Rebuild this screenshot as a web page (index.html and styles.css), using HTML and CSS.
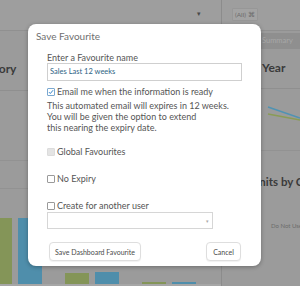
FILE: index.html
```html
<!DOCTYPE html>
<html>
<head>
<meta charset="utf-8">
<link rel="stylesheet" href="styles.css">
</head>
<body>
<div class="dash">
  <div class="col left">
    <div class="filterbar"><span class="caret">▾</span></div>
    <div class="ptitle"><span class="clip-title">Sales by Category</span></div>
    <div class="rowband r1"></div>
    <div class="rowband r2"></div>
    <div class="bars">
      <div class="group"><span class="bar green" style="height:66px"></span><span class="bar blue" style="height:66px"></span></div>
      <div class="group"><span class="bar green" style="height:11px"></span><span class="bar blue" style="height:12px"></span></div>
      <div class="group"><span class="bar green" style="height:2px"></span><span class="bar blue" style="height:2px"></span></div>
    </div>
  </div>
  <div class="col right">
    <div class="filterbar rf"><span class="chip">(All) ⌘</span></div>
    <div class="tabs"><span class="tab">Summary</span></div>
    <div class="ytitle">Year</div>
    <div class="chart">
      <svg width="78" height="61" viewBox="0 0 78 61">
        <polyline points="46,18 78,29" fill="none" stroke="#4f93b3" stroke-width="1.5"/>
        <polyline points="46,25 78,31" fill="none" stroke="#8a9c55" stroke-width="1.5"/>
      </svg>
    </div>
    <div class="utitle">Units by Category</div>
    <div class="legend">Do Not Use</div>
  </div>
</div>

<div class="overlay">
  <div class="modal">
    <div class="mtitle">Save Favourite</div>
    <div class="mbody">
      <label class="flabel">Enter a Favourite name</label>
      <div class="input">Sales Last 12 weeks</div>
      <div class="check-row email">
        <span class="cb checked">
          <svg width="8" height="8" viewBox="0 0 8 8"><path d="M1.3 4.2 L3.1 6 L6.8 1.6" fill="none" stroke="#2d7fc6" stroke-width="1.3"/></svg>
        </span>
        <span>Email me when the information is ready</span>
      </div>
      <p class="desc">This automated email will expires in 12 weeks.<br>You will be given the option to extend<br>this nearing the expiry date.</p>
      <div class="check-row global"><span class="cb disabled"></span><span>Global Favourites</span></div>
      <div class="check-row noexp"><span class="cb"></span><span>No Expiry</span></div>
      <div class="check-row create"><span class="cb"></span><span>Create for another user</span></div>
      <div class="select"><span class="sel-caret">▾</span></div>
      <div class="actions">
        <button class="btn save">Save Dashboard Favourite</button>
        <button class="btn cancel">Cancel</button>
      </div>
    </div>
  </div>
</div>
</body>
</html>
```

FILE: styles.css
```css
* { box-sizing: border-box; }
html, body { margin: 0; padding: 0; }
body {
  width: 300px;
  height: 286px;
  overflow: hidden;
  background: #9b9b9b;
  font-family: "Lato", "Open Sans", sans-serif;
  position: relative;
}
.dash {
  display: grid;
  grid-template-columns: 222px 78px;
  height: 286px;
}
.col { display: flex; flex-direction: column; overflow: hidden; }
.left { border-right: 1px solid #8c8c8c; }
.filterbar {
  height: 31px;
  flex: none;
  border-bottom: 1px solid #909090;
  background: #9e9e9e;
  display: flex;
  align-items: center;
  justify-content: flex-end;
  padding-right: 12px;
}
.left .filterbar { padding-right: 20px; }
.caret { font-size: 7px; color: #4a4a4a; margin-top: -3px; }
.ptitle {
  height: 60px;
  flex: none;
  border-bottom: 1px solid #8f8f8f;
  padding-top: 31px;
  font-size: 12px;
  line-height: 14px;
  font-weight: bold;
  color: #3a3a3a;
  white-space: nowrap;
}
.clip-title { display: inline-block; margin-left: -78px; }
.rowband { flex: none; border-bottom: 1px solid #929292; }
.r1 { height: 70px; }
.r2 { height: 28px; }
.bars {
  flex: 1;
  display: flex;
  align-items: flex-end;
  margin-left: -12px;
  border-bottom: 2px solid #a6a6a6;
}
.group { width: 77px; display: flex; gap: 6px; align-items: flex-end; flex: none; }
.bar { display: block; width: 24px; }
.green { background: #849558; }
.blue { background: #4f8eab; }

.rf { justify-content: flex-start; padding-left: 10px; padding-right: 0; }
.chip {
  font-size: 6.5px;
  color: #6a6a6a;
  background: #a3a3a3;
  border: 1px solid #979797;
  padding: 2px 2px;
  line-height: 7px;
  border-radius: 1px;
  margin-top: -2px;
}
.tabs { height: 18px; flex: none; display: flex; justify-content: flex-end; padding-top: 2px; }
.tab {
  width: 45px;
  height: 16px;
  background: #8f8f8f;
  color: #a8a8a8;
  font-size: 7.5px;
  line-height: 16px;
  padding-left: 7px;
}
.ytitle {
  height: 40px;
  flex: none;
  border-bottom: 1px solid #8f8f8f;
  padding-top: 12px;
  padding-left: 40px;
  font-size: 12px;
  line-height: 14px;
  font-weight: bold;
  color: #3a3a3a;
}
.chart { height: 62px; flex: none; border-bottom: 1px solid #929292; }
.chart svg { display: block; }
.utitle {
  flex: none;
  padding-top: 24px;
  padding-left: 29px;
  font-size: 11.5px;
  line-height: 14px;
  font-weight: bold;
  color: #3a3a3a;
  white-space: nowrap;
}
.legend {
  flex: none;
  margin-top: 33px;
  padding-left: 49px;
  font-size: 6px;
  color: #6c6c6c;
  white-space: nowrap;
}

/* modal */
.overlay {
  position: absolute;
  left: 28px;
  top: 24px;
}
.modal {
  width: 233px;
  height: 242px;
  background: #fff;
  border-radius: 8px;
  box-shadow: 0 1px 4px rgba(0,0,0,0.3);
  display: flex;
  flex-direction: column;
}
.mtitle {
  padding: 6px 0 0 8px;
  font-size: 10px;
  line-height: 12px;
  color: #6f6f6f;
}
.mbody {
  padding: 11px 0 0 19px;
  display: flex;
  flex-direction: column;
  font-size: 9px;
  color: #555;
}
.flabel { line-height: 10px; color: #555; font-size: 9px; }
.input {
  margin-top: 0;
  width: 195px;
  height: 18px;
  border: 1px solid #cfcfcf;
  padding-left: 2px;
  font-size: 7.5px;
  line-height: 16px;
  color: #2e6384;
}
.check-row { display: flex; align-items: center; gap: 2px; line-height: 11px; }
.cb {
  width: 8px;
  height: 8px;
  border: 1px solid #9a9a9a;
  border-radius: 1px;
  flex: none;
  display: flex;
  align-items: center;
  justify-content: center;
}
.cb svg { display: block; }
.cb.checked { border-color: #7aa8d0; }
.cb.disabled { background: #e4e4e4; border-color: #dcdcdc; }
.email { margin-top: 5px; }
.desc { margin: 3px 0 0 0; line-height: 11px; }
.global { margin-top: 13px; }
.noexp { margin-top: 16px; }
.create { margin-top: 16px; }
.select {
  margin-top: 1px;
  width: 166px;
  height: 17px;
  border: 1px solid #d6d6d6;
  display: flex;
  align-items: center;
  justify-content: flex-end;
  padding-right: 3px;
}
.sel-caret { font-size: 5px; color: #aaa; }
.actions {
  margin-top: 13px;
  width: 192px;
  margin-left: 2px;
  display: flex;
  justify-content: space-between;
}
.btn {
  height: 19px;
  background: #fff;
  border: 1px solid #dedede;
  border-radius: 4px;
  font-family: "Lato", "Open Sans", sans-serif;
  font-size: 7px;
  color: #4a4a4a;
  padding: 0;
  box-shadow: 0 1px 1px rgba(0,0,0,0.06);
}
.save { width: 92px; }
.cancel { width: 35px; }
```
